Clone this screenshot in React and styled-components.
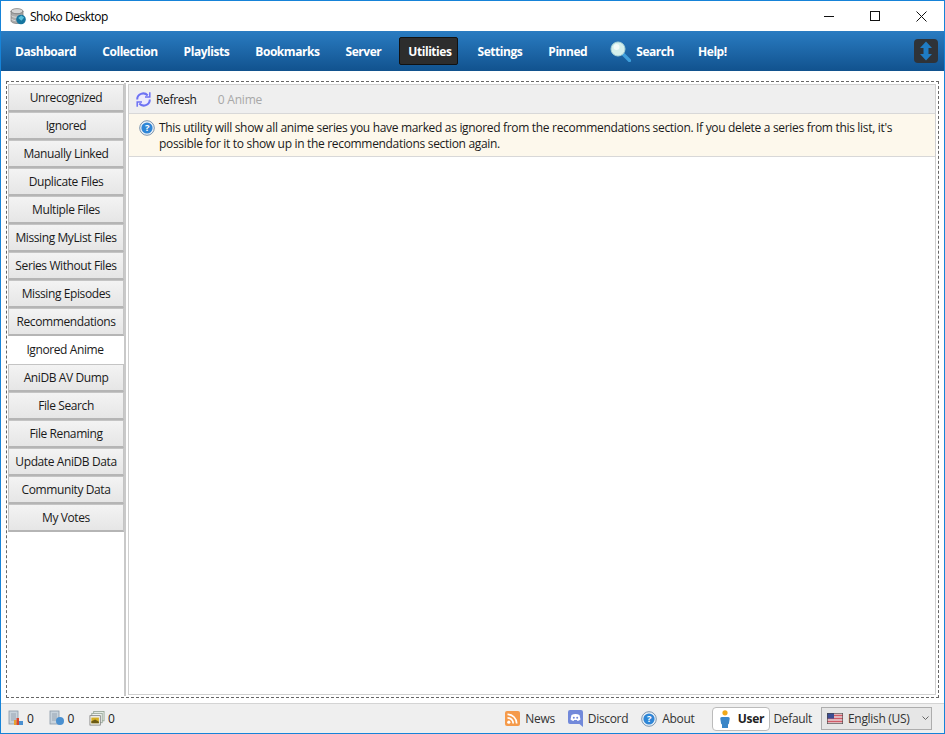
import React from "react";
import styled, { createGlobalStyle } from "styled-components";

const GlobalStyle = createGlobalStyle`
    html, body {
        margin: 0;
        padding: 0;
        background: #fff;
    }
    body {
        font-family: "Open Sans", "Noto Sans", "Liberation Sans", sans-serif;
        font-size: 12px;
        color: #1a1a1a;
    }
`;

const NAV_ITEMS = ["Dashboard", "Collection", "Playlists", "Bookmarks", "Server", "Utilities", "Settings", "Pinned"];

const UTILITIES = [
    "Unrecognized",
    "Ignored",
    "Manually Linked",
    "Duplicate Files",
    "Multiple Files",
    "Missing MyList Files",
    "Series Without Files",
    "Missing Episodes",
    "Recommendations",
    "Ignored Anime",
    "AniDB AV Dump",
    "File Search",
    "File Renaming",
    "Update AniDB Data",
    "Community Data",
    "My Votes"
];

const DbIcon = () => (
    <svg width="17" height="17" viewBox="0 0 17 17">
        <ellipse cx="7" cy="3.2" rx="6" ry="2.600" fill="#d6d6d6" stroke="#777" strokeWidth="0.700" />
        <path d="M1 3.200v9.600c0 1.500 2.700 2.700 6 2.700s6-1.200 6-2.700V3.200c0 1.500-2.700 2.600-6 2.600s-6-1.100-6-2.600z" fill="#ababab" stroke="#777" strokeWidth="0.700" />
        <path d="M1.500 7.800c1.200 1 3.200 1.500 5.500 1.500M1.500 11.300c1 .8 2.400 1.200 4 1.400" fill="none" stroke="#e6e6e6" strokeWidth="0.800" />
        <circle cx="11" cy="11.500" r="4.800" fill="#16759f" />
        <path d="M8.200 10l3-2.400 3 1.800-2.800 3.400z" fill="#58bfdc" />
    </svg>
);

const RefreshIcon = () => (
    <svg width="17" height="17" viewBox="0 0 17 17" fill="none" stroke="#6d72f2">
        <path d="M3 2h11a1.500 1.500 0 0 1 1.500 1.500v10A1.500 1.500 0 0 1 14 15H3a1.500 1.500 0 0 1-1.500-1.500v-10A1.500 1.500 0 0 1 3 2z" fill="#eceafc" stroke="none" />
        <path d="M2.200 8.500a6 6 0 0 1 10.500-4" strokeWidth="2" />
        <path d="M14.800 8.500a6 6 0 0 1-10.500 4" strokeWidth="2" />
        <path d="M14.800 1.300v4.800H10M2.200 15.700v-4.800H7" strokeWidth="1.500" />
    </svg>
);

const HelpIcon = ({ size = 16 }) => (
    <svg width={size} height={size} viewBox="0 0 16 16">
        <circle cx="8" cy="8" r="7.300" fill="#eef3f8" stroke="#7a93ad" strokeWidth="1" />
        <circle cx="8" cy="8" r="5.600" fill="#2f86d6" />
        <text x="8" y="11.300" textAnchor="middle" fontSize="9.500" fontWeight="700" fill="#fff" fontFamily="Open Sans, sans-serif">?</text>
    </svg>
);

const SearchIcon = () => (
    <svg width="21" height="21" viewBox="0 0 21 21">
        <path d="M12 12l7.500 7.500" stroke="#3f9fdc" strokeWidth="3.200" strokeLinecap="round" />
        <circle cx="8" cy="8" r="7" fill="#d4efeb" stroke="#a9d3d6" strokeWidth="1" />
        <circle cx="6.500" cy="6" r="3" fill="#f1fbf9" />
    </svg>
);

const ArrowsIcon = () => (
    <svg width="24" height="24" viewBox="0 0 24 24">
        <rect width="24" height="24" rx="4" fill="#2f3338" />
        <path d="M12 2.500l6 6.500h-3.500v6H18l-6 6.500L6 15h3.500V9H6z" fill="#1f7cc4" />
    </svg>
);

const FileStack = ({ children }) => (
    <svg width="16" height="17" viewBox="0 0 16 17">
        <rect x="1" y="1" width="9" height="13" fill="#c8d3dc" stroke="#8a9aa8" strokeWidth="0.800" />
        <path d="M3 4h5M3 6h5M3 8h5M3 10h5" stroke="#8a9aa8" strokeWidth="0.800" />
        {children}
    </svg>
);

const ImagesIcon = () => (
    <svg width="16" height="17" viewBox="0 0 17 17">
        <rect x="5" y="1" width="11" height="10" fill="#e8eee8" stroke="#8c9c8c" strokeWidth="0.800" />
        <rect x="3" y="3" width="11" height="10" fill="#eef2ee" stroke="#8c9c8c" strokeWidth="0.800" />
        <rect x="1" y="5.500" width="11" height="10" fill="#f2f2ea" stroke="#777" strokeWidth="0.800" />
        <rect x="2.500" y="7.500" width="8" height="6" fill="#d4ae24" />
        <path d="M2.500 11.500l4-2 4 2.500v1.500h-8z" fill="#6b5a14" />
    </svg>
);

const RssIcon = () => (
    <svg width="15" height="15" viewBox="0 0 15 15">
        <rect width="15" height="15" rx="2" fill="#f59a4a" />
        <circle cx="3.800" cy="11.200" r="1.600" fill="#fff" />
        <path d="M2.500 6.800a5.700 5.700 0 0 1 5.700 5.700M2.500 3.300a9.200 9.200 0 0 1 9.200 9.200" fill="none" stroke="#fff" strokeWidth="1.700" />
    </svg>
);

const DiscordIcon = () => (
    <svg width="15" height="17" viewBox="0 0 15 17">
        <path d="M2 0h11a2 2 0 0 1 2 2v15l-3.500-3H2a2 2 0 0 1-2-2V2a2 2 0 0 1 2-2z" fill="#7289da" />
        <path d="M3.500 5c2.500-1.400 5.500-1.400 8 0l1 4.500c-1 .9-2 1.300-3 1.400l-.6-1H6.100l-.6 1c-1-.1-2-.5-3-1.400z" fill="#fff" />
        <circle cx="5.800" cy="7.700" r="1" fill="#7289da" />
        <circle cx="9.200" cy="7.700" r="1" fill="#7289da" />
    </svg>
);

const UserIcon = () => (
    <svg width="12" height="18" viewBox="0 0 12 18">
        <circle cx="6" cy="2.800" r="2.600" fill="#f0a818" />
        <path d="M2.800 7h6.400c1 0 1.600.8 1.500 1.800L10 13c-.1 1-.6 1.300-1 1.500V18H3v-3.500c-.4-.2-.9-.5-1-1.500l-.7-4.200C1.200 7.800 1.800 7 2.800 7z" fill="#3a86c8" />
    </svg>
);

const FlagIcon = () => (
    <svg width="16" height="11" viewBox="0 0 16 11">
        <rect width="16" height="11" fill="#e6d4d8" />
        <path d="M0 1.800h16v1.500H0zM0 4.800h16v1.500H0zM0 7.800h16v1.500H0z" fill="#d05a66" />
        <rect width="7" height="5.600" fill="#3c4e94" />
        <rect x="0.300" y="0.300" width="15.400" height="10.400" fill="none" stroke="#444" strokeWidth="0.600" />
    </svg>
);

const App = () => {
    return (
        <Window>
            <GlobalStyle />
            <TitleBar>
                <AppIconSlot>
                    <DbIcon />
                </AppIconSlot>
                <TitleText>Shoko Desktop</TitleText>
                <WindowControls>
                    <WindowButton>
                        <svg width="10" height="10" viewBox="0 0 10 10">
                            <path d="M0 5.500h10" stroke="#111" strokeWidth="1" />
                        </svg>
                    </WindowButton>
                    <WindowButton>
                        <svg width="10" height="10" viewBox="0 0 10 10">
                            <rect x="0.500" y="0.500" width="9" height="9" fill="none" stroke="#111" strokeWidth="1" />
                        </svg>
                    </WindowButton>
                    <WindowButton>
                        <svg width="11" height="11" viewBox="0 0 11 11">
                            <path d="M0.500 0.500l10 10M10.500 0.500l-10 10" stroke="#111" strokeWidth="1" />
                        </svg>
                    </WindowButton>
                </WindowControls>
            </TitleBar>

            <NavBar>
                {NAV_ITEMS.map(item => (
                    <NavItem key={item} $active={item === "Utilities"}>
                        {item}
                    </NavItem>
                ))}
                <NavSearch>
                    <SearchIcon />
                    Search
                </NavSearch>
                <NavItem>Help!</NavItem>
                <NavEnd>
                    <ArrowsIcon />
                </NavEnd>
            </NavBar>

            <Body>
                <Frame>
                    <Sidebar>
                        {UTILITIES.map(item => (
                            <SideButton key={item} $selected={item === "Ignored Anime"}>
                                {item}
                            </SideButton>
                        ))}
                    </Sidebar>
                    <Panel>
                        <Toolbar>
                            <RefreshIcon />
                            <RefreshLabel>Refresh</RefreshLabel>
                            <CountLabel>0 Anime</CountLabel>
                        </Toolbar>
                        <Notice>
                            <HelpIcon />
                            <NoticeText>
                                This utility will show all anime series you have marked as ignored from the recommendations section. If you delete a series from this list, it's possible for it to show up in the recommendations section again.
                            </NoticeText>
                        </Notice>
                        <PanelContent />
                    </Panel>
                </Frame>
            </Body>

            <StatusBar>
                <StatusGroup>
                    <FileStack>
                        <rect x="6" y="10" width="2.500" height="5" fill="#e8a030" />
                        <rect x="8.500" y="8" width="2.500" height="7" fill="#d8452f" />
                        <rect x="11" y="11" width="4" height="4" fill="#4a90d0" />
                    </FileStack>
                    <Count>0</Count>
                </StatusGroup>
                <StatusGroup>
                    <FileStack>
                        <circle cx="11" cy="11" r="4" fill="#4a90d0" />
                    </FileStack>
                    <Count>0</Count>
                </StatusGroup>
                <StatusGroup>
                    <ImagesIcon />
                    <Count>0</Count>
                </StatusGroup>
                <StatusRight>
                    <StatusLink>
                        <RssIcon />
                        News
                    </StatusLink>
                    <StatusLink>
                        <DiscordIcon />
                        Discord
                    </StatusLink>
                    <StatusLink>
                        <HelpIcon />
                        About
                    </StatusLink>
                    <UserButton>
                        <UserIcon />
                        User
                    </UserButton>
                    <DefaultLabel>Default</DefaultLabel>
                    <LanguageSelect>
                        <FlagIcon />
                        <LanguageName>English (US)</LanguageName>
                        <svg width="7" height="5" viewBox="0 0 7 5">
                            <path d="M0.500 0.500L3.500 3.500L6.500 0.500" fill="none" stroke="#666" strokeWidth="1" />
                        </svg>
                    </LanguageSelect>
                </StatusRight>
            </StatusBar>
        </Window>
    );
};

export default App;

const Window = styled.div`
    box-sizing: border-box;
    width: 945px;
    height: 734px;
    display: flex;
    flex-direction: column;
    border: 1px solid #1683d8;
    background: #fff;
    overflow: hidden;
    letter-spacing: -0.32px;
`;

const TitleBar = styled.div`
    height: 30px;
    flex: none;
    display: flex;
    align-items: center;
    background: #fff;
`;

const AppIconSlot = styled.div`
    display: flex;
    margin: 0 3px 0 9px;
`;

const TitleText = styled.div`
    flex: 1;
    color: #000;
    letter-spacing: -0.48px;
`;

const WindowControls = styled.div`
    display: flex;
`;

const WindowButton = styled.div`
    width: 46px;
    height: 30px;
    display: flex;
    align-items: center;
    justify-content: center;
`;

const NavBar = styled.div`
    height: 40px;
    flex: none;
    display: flex;
    align-items: center;
    padding: 0 6px 0 4px;
    gap: 6px;
    background: linear-gradient(#2a7cc2, #11528e);
`;

const NavItem = styled.div`
    box-sizing: border-box;
    height: 28px;
    display: flex;
    align-items: center;
    padding: ${p => (p.$active ? "0 6px 0 8px" : "0 9px")};
    margin: ${p => (p.$active ? "0 3px 0 2px" : "0")};
    border-radius: 2px;
    color: #fff;
    font-weight: 700;
    letter-spacing: -0.45px;
    background: ${p => (p.$active ? "#2d2d2d" : "transparent")};
    border: 1px solid ${p => (p.$active ? "#111" : "transparent")};
`;

const NavSearch = styled(NavItem)`
    gap: 5px;
    padding: 0 7px 0 6px;
`;

const NavEnd = styled.div`
    margin-left: auto;
    display: flex;
`;

const Body = styled.div`
    flex: 1;
    min-height: 0;
    display: flex;
    padding: 10px 5px 5px;
`;

const Frame = styled.div`
    flex: 1;
    display: flex;
    border: 1px dashed #666;
    padding: 1px;
`;

const Sidebar = styled.div`
    box-sizing: border-box;
    width: 118px;
    flex: none;
    padding-top: 1px;
    border-right: 2px solid #c9c9c9;
`;

const SideButton = styled.div`
    box-sizing: border-box;
    height: 28px;
    display: flex;
    align-items: center;
    justify-content: center;
    white-space: nowrap;
    letter-spacing: -0.4px;
    color: #1a1a1a;
    padding: ${p => (p.$selected ? "0 2px 2px 0" : "0")};
    background: ${p => (p.$selected ? "#fff" : "linear-gradient(#f3f3f3, #e6e6e6)")};
    border: ${p => (p.$selected ? "none" : "1px solid #c4c4c4")};
    border-bottom: ${p => (p.$selected ? "none" : "2px solid #b5b5b5")};
`;

const Panel = styled.div`
    flex: 1;
    display: flex;
    flex-direction: column;
    min-width: 0;
    margin: 1px 1px 1px 2px;
    border: 1px solid #d0d0d0;
`;

const Toolbar = styled.div`
    box-sizing: border-box;
    height: 29px;
    flex: none;
    display: flex;
    align-items: center;
    padding-left: 6px;
    background: #efefef;
    border-bottom: 1px solid #d8d8d8;
`;

const RefreshLabel = styled.span`
    margin-left: 4px;
`;

const CountLabel = styled.span`
    margin-left: 21px;
    color: #a8a8a8;
    letter-spacing: -0.2px;
`;

const Notice = styled.div`
    box-sizing: border-box;
    height: 43px;
    flex: none;
    display: flex;
    gap: 4px;
    padding: 6px 10px 0;
    background: #fdf8ec;
    border-bottom: 1px solid #d8d8d8;
`;

const NoticeText = styled.div`
    flex: 1;
    line-height: 16px;
    color: #1a1a1a;
`;

const PanelContent = styled.div`
    flex: 1;
    background: #fff;
`;

const StatusBar = styled.div`
    box-sizing: border-box;
    height: 30px;
    flex: none;
    display: flex;
    align-items: center;
    padding: 0 12px 0 7px;
    background: #efefef;
    border-top: 1px solid #d4d4d4;
`;

const StatusGroup = styled.div`
    display: flex;
    align-items: center;
    gap: 3px;
    margin-right: 15px;
`;

const Count = styled.span`
    color: #222;
`;

const StatusRight = styled.div`
    margin-left: auto;
    display: flex;
    align-items: center;
`;

const StatusLink = styled.div`
    display: flex;
    align-items: center;
    gap: 5px;
    margin-right: 13px;
    color: #333;
`;

const UserButton = styled.div`
    box-sizing: border-box;
    width: 58px;
    height: 24px;
    display: flex;
    align-items: center;
    justify-content: center;
    gap: 7px;
    margin-left: 5px;
    background: #fff;
    border: 1px solid #bbb;
    border-radius: 4px;
    font-weight: 700;
    color: #222;
`;

const DefaultLabel = styled.span`
    margin: 0 9px 0 3px;
    color: #333;
`;

const LanguageSelect = styled.div`
    box-sizing: border-box;
    width: 111px;
    height: 23px;
    display: flex;
    align-items: center;
    padding: 0 2px 0 5px;
    background: #e6e6e6;
    border: 1px solid #adadad;
`;

const LanguageName = styled.span`
    flex: 1;
    margin-left: 5px;
    color: #333;
`;
